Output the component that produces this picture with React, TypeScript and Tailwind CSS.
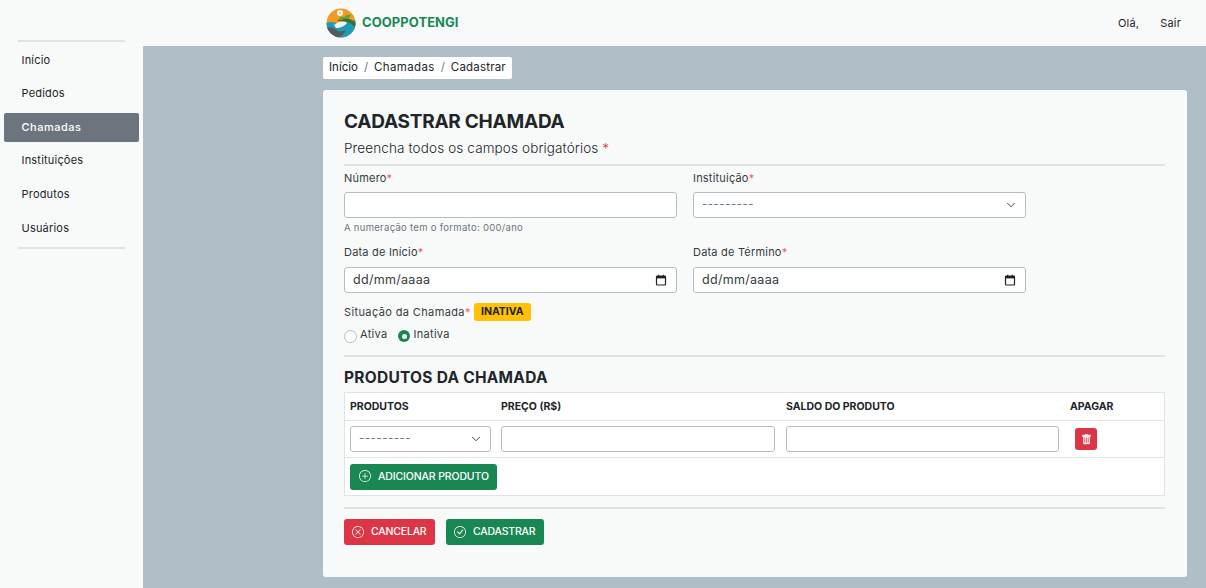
import React from "react";
import { ChevronDown } from "lucide-react";
import { BsPlusCircle, BsXCircle, BsCheckCircle } from "react-icons/bs";

function Logo() {
  return (
    <svg width="30" height="30" viewBox="0 0 30 30">
      <defs>
        <clipPath id="c"><circle cx="15" cy="15" r="14.5" /></clipPath>
      </defs>
      <g clipPath="url(#c)">
        <rect width="30" height="30" fill="#f39a23" />
        <path d="M0 15C5 13 9 14 12 16L30 12V30H0Z" fill="#1f9bb8" />
        <path d="M11 13C16 9 24 9 30 15V20C25 14 20 13 11 13Z" fill="#3c6f2b" />
        <path d="M13 12C13 9 15 8 18 9C18 11 16 13 13 12ZM18 10C19 7 22 6 25 7C24 10 21 12 18 10Z" fill="#57a83a" />
        <circle cx="14" cy="5" r="3" fill="#f4f4ee" />
        <circle cx="14" cy="5" r="1.1" fill="#d9c98a" />
        <path d="M8 17C11 14 15 13 20 14L21 15C19 18 14 20 10 20Z" fill="#eef3f0" />
        <path d="M1 20C5 18 9 21 12 23C15 24 18 23 20 22C18 27 13 30 9 30H3Z" fill="#565a5c" />
      </g>
    </svg>
  );
}

function DateField() {
  return (
    <div className="flex h-[26px] w-[333px] items-center justify-between rounded-[3px] border border-[#b0bfc7] bg-white pl-[8px] pr-[9px] text-[12.5px] tracking-[0.3px] text-[#343a40]">
      <span>dd/mm/aaaa</span>
      <svg width="12" height="12" viewBox="0 0 12 12" fill="none">
        <rect x="1.5" y="2" width="9" height="9" rx="0.8" stroke="#222" strokeWidth="1.2" />
        <rect x="1.5" y="2" width="9" height="2.4" fill="#222" />
        <rect x="3" y="0.8" width="1.2" height="1.6" fill="#222" />
        <rect x="7.8" y="0.8" width="1.2" height="1.6" fill="#222" />
      </svg>
    </div>
  );
}

function SelectField({ width }: { width: string }) {
  return (
    <div className={`flex h-[26px] ${width} items-center justify-between rounded-[3px] border border-[#b0bfc7] bg-white pl-[8px] pr-[7px] text-[11.5px] text-[#6c757d]`}>
      <span className="tracking-[0.5px]">---------</span>
      <ChevronDown size={14} strokeWidth={1.6} color="#343a40" />
    </div>
  );
}

function Req() {
  return <span className="text-[#e4606d]">*</span>;
}

const menu = ["Início", "Pedidos", "Chamadas", "Instituições", "Produtos", "Usuários"];

export default function App() {
  return (
    <div className="flex h-[588px] w-[1206px] overflow-hidden bg-[#f8fafa] font-['Inter','Noto_Sans',sans-serif] text-[#212529]">
      <aside className="w-[143px] shrink-0 pt-[40px]">
        <div className="mx-[18px] h-[2px] bg-[#dfe3e3]" />
        <nav className="mt-[2px] flex flex-col px-[4px]">
          {menu.map((m) => (
            <div
              key={m}
              className={
                m === "Chamadas"
                  ? "flex h-[29px] my-[2.3px] items-center rounded-[2px] bg-[#6c757d] pb-[1px] pl-[17.5px] text-[11px] font-medium tracking-[0.5px] text-white"
                  : "flex h-[33.6px] items-center pb-[2px] pl-[17.5px] text-[11px] font-normal tracking-[0.2px] text-[#212529]"
              }
            >
              {m}
            </div>
          ))}
        </nav>
        <div className="mx-[18px] mt-[1px] h-[2px] bg-[#dfe3e3]" />
      </aside>

      <div className="flex min-w-0 flex-1 flex-col">
        <header className="flex h-[46px] shrink-0 items-center justify-between pl-[183px] pr-[25px]">
          <div className="flex items-center gap-[6px]">
            <Logo />
            <span className="text-[13px] font-bold tracking-[0.05px] text-[#198754]">COOPPOTENGI</span>
          </div>
          <div className="flex gap-[21px] text-[11px] tracking-[0.2px]">
            <span>Olá,</span>
            <span>Sair</span>
          </div>
        </header>

        <main className="flex-1 bg-[#b0bfc7] pl-[180px] pr-[19px] pt-[11px]">
          <div className="flex h-[22px] w-[189px] items-center gap-[6px] rounded-[2px] bg-white pl-[6px] text-[11.5px]">
            <span>Início</span>
            <span className="text-[#6c757d]">/</span>
            <span className="tracking-[0.35px]">Chamadas</span>
            <span className="text-[#6c757d]">/</span>
            <span className="tracking-[0.2px]">Cadastrar</span>
          </div>

          <section className="mt-[11px] h-[487px] rounded-[3px] bg-[#f8fafa] pl-[21px] pr-[22px] pt-[20px]">
            <h1 className="h-[24px] text-[19px] font-bold leading-[24px] tracking-[-0.25px] text-[#212529]">CADASTRAR CHAMADA</h1>
            <p className="mt-[4px] h-[20px] text-[13.5px] font-light leading-[20px] tracking-[0.13px] text-[#212529]">
              Preencha todos os campos obrigatórios <span className="text-[#dc3545]">*</span>
            </p>
            <div className="mt-[6px] h-[2px] bg-[#dfe3e3]" />

            <div className="mt-[4px] grid grid-cols-[333px_333px] gap-x-[16px] text-[11px] tracking-[0.2px] text-[#343a40]">
              <div>
                <div className="h-[16px] leading-[16px]">Número<Req /></div>
                <div className="mt-[6px] h-[26px] rounded-[3px] border border-[#b0bfc7] bg-white" />
                <div className="mt-[3px] h-[14px] text-[9.5px] leading-[14px] tracking-[0.3px] text-[#6c757d]">A numeração tem o formato: 000/ano</div>
              </div>
              <div>
                <div className="h-[16px] leading-[16px]">Instituição<Req /></div>
                <div className="mt-[6px]"><SelectField width="w-[333px]" /></div>
              </div>
              <div className="mt-[9px]">
                <div className="h-[16px] leading-[16px]">Data de Início<Req /></div>
                <div className="mt-[7px]"><DateField /></div>
              </div>
              <div className="mt-[9px]">
                <div className="h-[16px] leading-[16px]">Data de Término<Req /></div>
                <div className="mt-[7px]"><DateField /></div>
              </div>
            </div>

            <div className="mt-[10px] flex h-[18px] items-center gap-[3px] text-[11px] text-[#343a40]">
              <span className="tracking-[0.38px]">Situação da Chamada<Req /></span>
              <span className="flex h-[18px] w-[57px] items-center justify-center rounded-[3px] bg-[#ffc107] text-[10.5px] font-bold text-[#212529]">INATIVA</span>
            </div>

            <div className="mt-[5px] flex h-[18px] items-center text-[11px] tracking-[0.3px] text-[#343a40]">
              <span className="mt-[2px] h-[13px] w-[13px] rounded-full border border-[#b0bfc7] bg-white" />
              <span className="ml-[3px] mt-[-2px]">Ativa</span>
              <span className="ml-[11px] mt-[2px] flex h-[12px] w-[12px] items-center justify-center rounded-full bg-[#198754]">
                <span className="h-[5px] w-[5px] rounded-full bg-white" />
              </span>
              <span className="ml-[3px] mt-[-2px]">Inativa</span>
            </div>

            <div className="mt-[11px] h-[2px] bg-[#dfe3e3]" />
            <h2 className="mt-[11px] h-[20px] text-[15.5px] font-bold leading-[20px] tracking-[0.26px] text-[#212529]">PRODUTOS DA CHAMADA</h2>

            <div className="mt-[4px] h-[104px] border border-[#dfe3e3] bg-white">
              <div className="grid h-[28px] grid-cols-[151px_285px_284px_99px] items-center border-b border-[#dfe3e3] pl-[5px] text-[10.5px] font-bold text-[#212529]">
                <span>PRODUTOS</span>
                <span>PREÇO (R$)</span>
                <span>SALDO DO PRODUTO</span>
                <span>APAGAR</span>
              </div>
              <div className="grid h-[37px] grid-cols-[151px_285px_284px_99px] items-center border-b border-[#dfe3e3] pl-[5px]">
                <SelectField width="w-[141px]" />
                <div className="h-[26px] w-[274px] rounded-[3px] border border-[#b0bfc7] bg-white" />
                <div className="h-[26px] w-[273px] rounded-[3px] border border-[#b0bfc7] bg-white" />
                <button className="ml-[5px] flex h-[22px] w-[22px] items-center justify-center rounded-[3px] bg-[#dc3545]">
                  <svg width="11" height="11" viewBox="0 0 16 16" fill="#fbe9eb">
                    <path d="M2.5 1a1 1 0 0 0-1 1v1a1 1 0 0 0 1 1H3v9a2 2 0 0 0 2 2h6a2 2 0 0 0 2-2V4h.5a1 1 0 0 0 1-1V2a1 1 0 0 0-1-1H10a1 1 0 0 0-1-1H7a1 1 0 0 0-1 1H2.5zm3 4a.5.5 0 0 1 .5.5v7a.5.5 0 0 1-1 0v-7a.5.5 0 0 1 .5-.5zM8 5a.5.5 0 0 1 .5.5v7a.5.5 0 0 1-1 0v-7A.5.5 0 0 1 8 5zm3 .5v7a.5.5 0 0 1-1 0v-7a.5.5 0 0 1 1 0z" />
                  </svg>
                </button>
              </div>
              <div className="pl-[5px] pt-[6px]">
                <button className="flex h-[26px] w-[147px] items-center gap-[7px] rounded-[3px] bg-[#198754] pl-[9px] text-[10.5px] font-medium tracking-[-0.13px] text-white">
                  <BsPlusCircle size={12} className="mb-[2px]" />
                  <span>ADICIONAR PRODUTO</span>
                </button>
              </div>
            </div>

            <div className="mt-[11px] h-[2px] bg-[#dfe3e3]" />
            <div className="mt-[10px] flex gap-[11px] text-[10.5px] font-medium tracking-[-0.2px] text-white">
              <button className="flex h-[26px] w-[91px] items-center gap-[7px] rounded-[3px] bg-[#dc3545] pl-[8px]">
                <BsXCircle size={12} />
                <span>CANCELAR</span>
              </button>
              <button className="flex h-[26px] w-[98px] items-center gap-[7px] rounded-[3px] bg-[#198754] pl-[8px]">
                <BsCheckCircle size={12} />
                <span>CADASTRAR</span>
              </button>
            </div>
          </section>
        </main>
      </div>
    </div>
  );
}
